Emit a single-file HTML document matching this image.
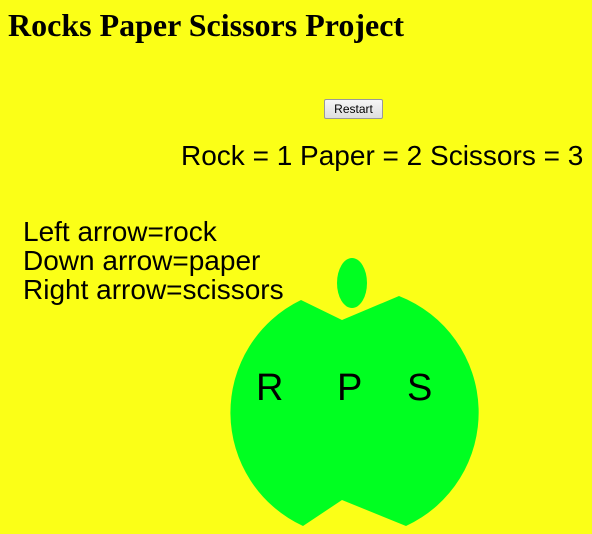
<!DOCTYPE html>
<html><head><style>
html,body{margin:0;padding:0;background:#fbff17;width:592px;height:534px;overflow:hidden;position:relative}
.t{position:absolute;white-space:nowrap;font-family:"Liberation Sans",sans-serif;color:#000;line-height:1}
h1{position:absolute;left:8px;top:9px;margin:0;font-family:"Liberation Serif",serif;font-weight:bold;font-size:32px;line-height:1;white-space:nowrap}
button{position:absolute;left:324px;top:99px;width:59px;height:20px;font:12px "Liberation Sans",sans-serif;padding:0;background:linear-gradient(#f6f6f6,#dedede);border:1px solid #999;border-radius:2px;color:#000}
</style></head><body>
<h1>Rocks Paper Scissors Project</h1>
<button>Restart</button>
<div class="t" style="left:181px;top:142px;font-size:28px">Rock = 1 Paper = 2 Scissors = 3</div>
<div class="t" style="left:23px;top:217px;font-size:28px;line-height:29px">Left arrow=rock<br>Down arrow=paper<br>Right arrow=scissors</div>
<svg style="position:absolute;left:0;top:0" width="592" height="534">
<ellipse cx="352" cy="283" rx="15" ry="25" fill="#00ff21"/>
<path d="M301,300 L342,320 L399,296 A125,125 0 0 1 406,526 L342,500 L303,526 A125,125 0 0 1 301,300 Z" fill="#00ff21"/>
<text x="256" y="400" font-family="Liberation Sans" font-size="38">R</text>
<text x="337" y="400" font-family="Liberation Sans" font-size="38">P</text>
<text x="407" y="400" font-family="Liberation Sans" font-size="38">S</text>
</svg>
</body></html>
